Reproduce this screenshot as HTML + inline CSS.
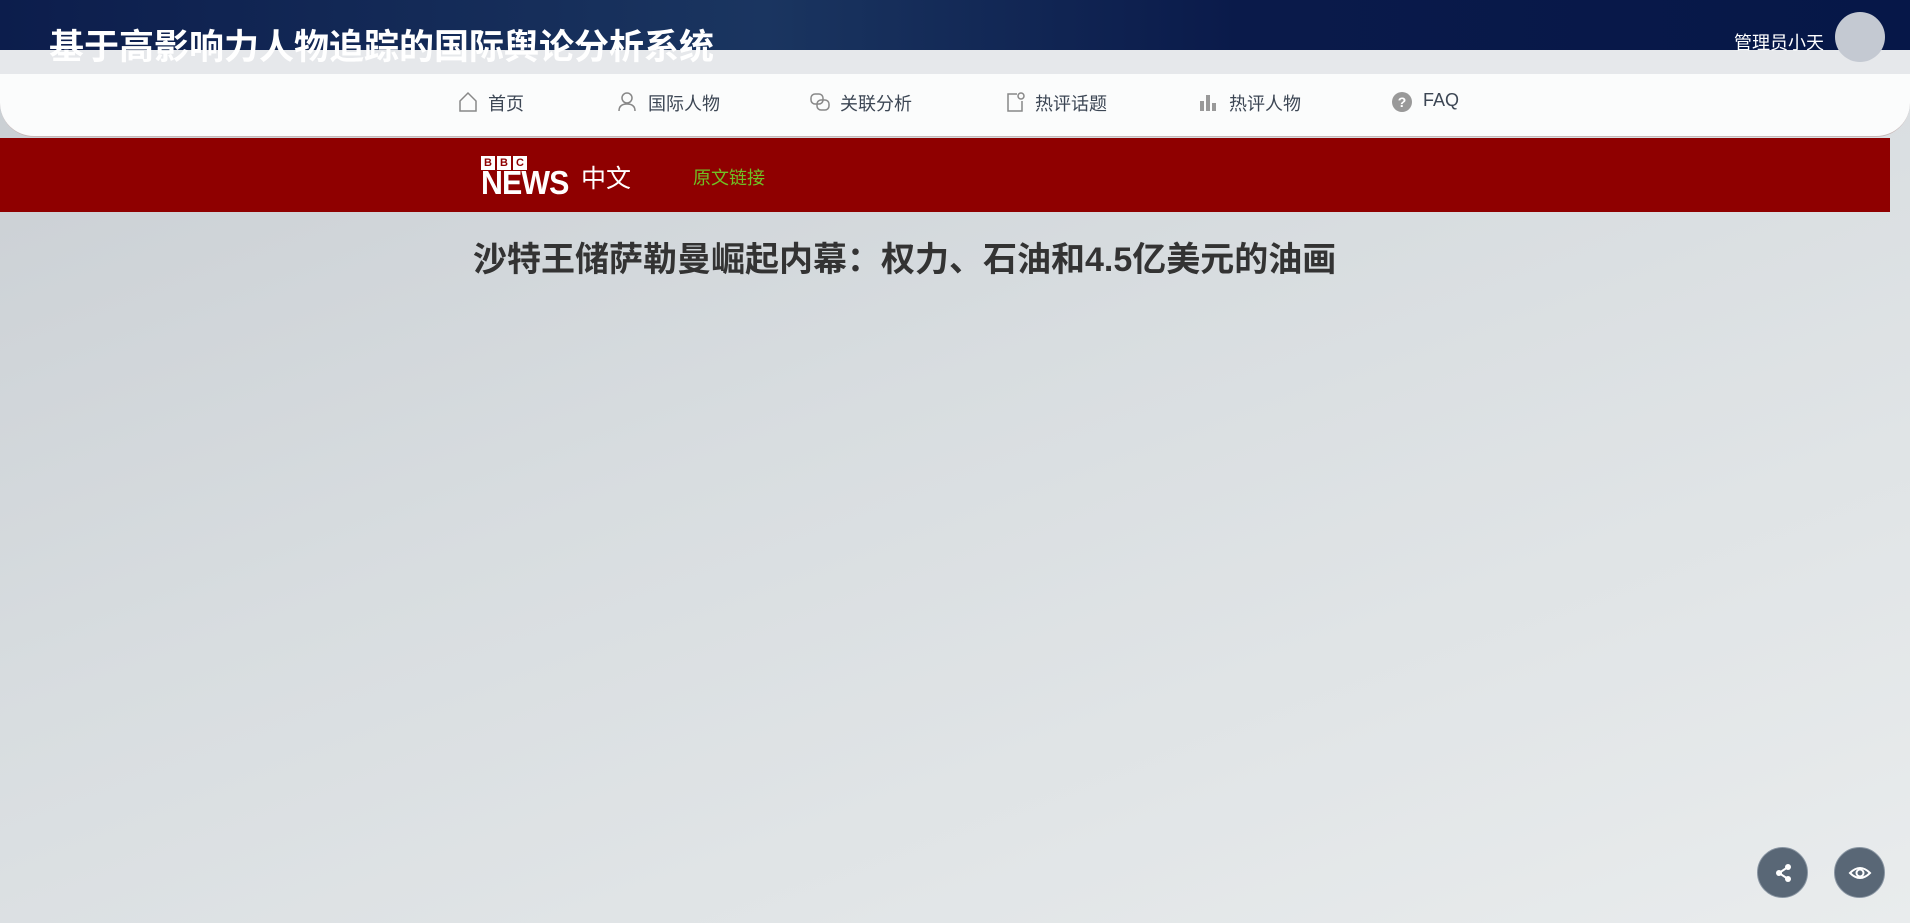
<!DOCTYPE html>
<html><head><meta charset="utf-8"><style>
*{margin:0;padding:0;box-sizing:border-box}
body{width:1910px;height:923px;overflow:hidden;font-family:"Liberation Sans","Noto Sans CJK SC",sans-serif;background:linear-gradient(160deg,#c8cdd2 0%,#d8dde0 45%,#e9eced 100%);position:relative}
.top{position:absolute;left:0;top:0;width:1910px;height:50px;background:linear-gradient(90deg,#0c1d4c 0%,#1a3560 40%,#0a1a4a 65%,#061748 100%)}
.band{position:absolute;left:0;top:50px;width:1910px;height:24px;background:#e6e8eb}
.title{position:absolute;left:49px;top:19px;font-size:35px;font-weight:bold;color:#fff;letter-spacing:0;white-space:nowrap}
.admin{position:absolute;left:1734px;top:29px;font-size:18px;color:#fff}
.avatar{position:absolute;left:1835px;top:12px;width:50px;height:50px;border-radius:50%;background:#c4c9d2}
.nav{position:absolute;left:0;top:74px;width:1910px;height:63px;background:#fbfcfc;border-radius:0 0 34px 34px;border-bottom:1px solid #c8b8b8}
.ni{position:absolute;top:90px;font-size:18px;color:#3c4654;white-space:nowrap}
.ic{position:absolute;top:91px}
.red{position:absolute;left:0;top:138px;width:1890px;height:74px;background:#8f0000}
.bbc{position:absolute;left:481px;top:153px}
.bbc span{display:inline-block;width:14px;height:14px;background:#fff;color:#8f0000;font-size:11px;font-weight:bold;text-align:center;line-height:14px;margin-right:2px}
.news{position:absolute;left:481px;top:164px;font-size:33px;font-weight:bold;color:#fff;letter-spacing:-1px;transform:scaleX(0.92);transform-origin:left}
.zw{position:absolute;left:581px;top:159px;font-size:25px;color:#fff}
.link{position:absolute;left:693px;top:164px;font-size:18px;color:#6fc025}
h1{position:absolute;left:473px;top:232px;font-size:34px;font-weight:bold;color:#333;white-space:nowrap}
.fb{position:absolute;top:847px;width:51px;height:51px;border-radius:50%;background:#596776;border:1px solid #8a96a3}
</style></head><body>
<div class="top"></div><div class="band"></div>
<div class="title">基于高影响力人物追踪的国际舆论分析系统</div>
<div class="admin">管理员小天</div><div class="avatar"></div>
<div class="nav"></div>
<svg class="ic" style="left:458px" width="20" height="22" viewBox="0 0 20 22"><path d="M2 10 L10 2 L18 10 V20 H2 Z" fill="none" stroke="#888" stroke-width="1.5"/></svg>
<div class="ni" style="left:488px">首页</div>
<svg class="ic" style="left:617px" width="20" height="22" viewBox="0 0 20 22"><circle cx="10" cy="7" r="5" fill="none" stroke="#888" stroke-width="1.5"/><path d="M2 20 Q2 13 10 13 Q18 13 18 20" fill="none" stroke="#888" stroke-width="1.5"/></svg>
<div class="ni" style="left:648px">国际人物</div>
<svg class="ic" style="left:809px" width="22" height="22" viewBox="0 0 22 22"><rect x="2" y="3" width="12" height="10" rx="4" fill="none" stroke="#888" stroke-width="1.5"/><rect x="8" y="9" width="12" height="10" rx="4" fill="none" stroke="#888" stroke-width="1.5"/></svg>
<div class="ni" style="left:840px">关联分析</div>
<svg class="ic" style="left:1005px" width="20" height="22" viewBox="0 0 20 22"><path d="M12 3 H3 V20 H17 V10" fill="none" stroke="#888" stroke-width="1.5"/><circle cx="16" cy="5" r="3" fill="none" stroke="#888" stroke-width="1.5"/></svg>
<div class="ni" style="left:1035px">热评话题</div>
<svg class="ic" style="left:1198px" width="20" height="22" viewBox="0 0 20 22"><rect x="2" y="10" width="4" height="10" fill="#999"/><rect x="8" y="4" width="4" height="16" fill="#999"/><rect x="14" y="12" width="4" height="8" fill="#999"/></svg>
<div class="ni" style="left:1229px">热评人物</div>
<svg class="ic" style="left:1391px" width="22" height="22" viewBox="0 0 22 22"><circle cx="11" cy="11" r="10" fill="#999"/><text x="11" y="16" font-size="14" font-weight="bold" fill="#fff" text-anchor="middle" font-family="Liberation Sans">?</text></svg>
<div class="ni" style="left:1423px">FAQ</div>
<div class="red"></div>
<div class="bbc"><span>B</span><span>B</span><span>C</span></div>
<div class="news">NEWS</div>
<div class="zw">中文</div>
<div class="link">原文链接</div>
<h1>沙特王储萨勒曼崛起内幕：权力、石油和4.5亿美元的油画</h1>
<div class="fb" style="left:1757px"><svg width="51" height="51" viewBox="0 0 51 51"><g fill="#fff"><circle cx="30" cy="19" r="3"/><circle cx="21" cy="25" r="3"/><circle cx="30" cy="31" r="3"/></g><path d="M30 19 L21 25 L30 31" stroke="#fff" stroke-width="2" fill="none"/></svg></div>
<div class="fb" style="left:1834px"><svg width="51" height="51" viewBox="0 0 51 51"><path d="M15 25 Q25 15 35 25 Q25 35 15 25 Z" fill="none" stroke="#fff" stroke-width="2"/><circle cx="25" cy="25" r="3.5" fill="none" stroke="#fff" stroke-width="2"/></svg></div>
</body></html>
